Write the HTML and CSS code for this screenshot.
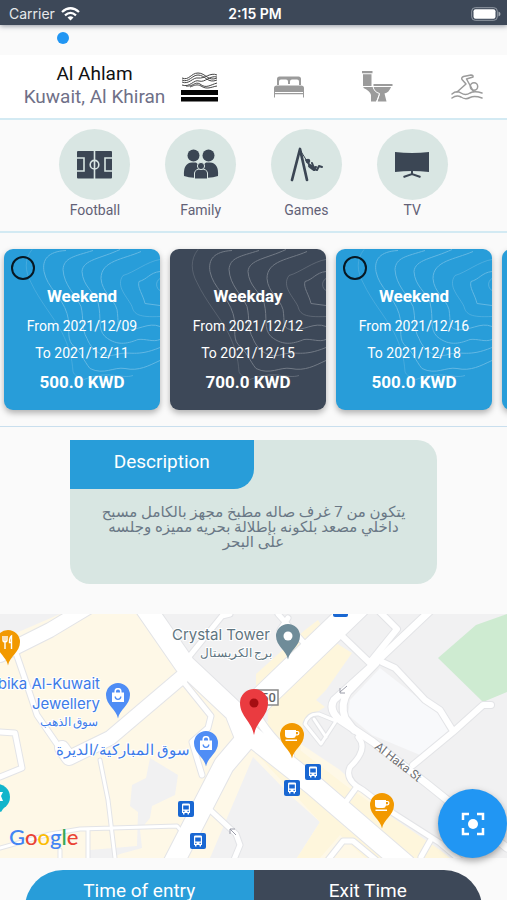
FILE: index.html
```html
<!DOCTYPE html>
<html lang="en">
<head>
<meta charset="utf-8">
<meta name="viewport" content="width=device-width, initial-scale=1">
<title>Al Ahlam</title>
<link rel="stylesheet" href="styles.css">
</head>
<body>
<svg class="defs" aria-hidden="true">
  <symbol id="contours" viewBox="0 0 156 160">
    <g fill="none" stroke="#fff" stroke-width="1">
      <path d="M28 0C20 10 21 22 27 33C36 52 48 65 58 83C65 97 68 108 69 122C70 126 75 128 80 130" opacity=".5"/>
      <path d="M62 1C44 2 38 10 40 22C43 38 58 47 63 64C67 77 62 87 68 95C77 102 80 112 86 119C100 126 110 117 121 119C135 122 145 116 156 111"/>
      <path d="M89 1C70 7 60 8 59 20C60 36 71 44 77 57C80 69 77 79 83 89C88 102 100 109 112 105C126 101 132 108 156 98"/>
      <path d="M116 0C97 9 79 10 78 22C79 37 90 42 94 53C98 69 93 79 101 87C114 98 126 93 134 90C142 89 149 93 156 90"/>
      <path d="M137 2C119 10 97 11 97 29C98 43 110 49 113 60C115 72 112 78 120 80C134 82 144 72 156 77"/>
      <path d="M156 10C143 12 130 23 119 26C111 37 124 48 128 57C130 65 135 68 156 67" opacity=".6"/>
      <path d="M156 22C146 23 143 30 135 32C133 38 139 45 141 54L156 56"/>
      <path d="M156 29C151 32 152 39 156 41M80 130C105 120 117 130 129 126" opacity=".7"/>
    </g>
  </symbol>
  <symbol id="pin" viewBox="-13 -13 26 38">
    <path d="M0 23.500C-1.500 14.500-12 10-12 0A12 12 0 0 1 12 0C12 10 1.500 14.500 0 23.500Z"/>
  </symbol>
  <symbol id="bus" viewBox="0 0 16 16">
    <rect width="16" height="16" rx="2" fill="#1967d2"/>
    <path fill="#fff" d="M4 3.500Q4 2.500 5.500 2.500h5Q12 2.500 12 3.500V12h-1v1.500H9.500V12h-3v1.500H5V12H4z"/>
    <path fill="#1967d2" d="M5.200 4.500h5.600v4H5.200zM5.200 9.800h1.300V11H5.200zM9.500 9.800h1.300V11H9.500z"/>
  </symbol>
  <symbol id="cup" viewBox="0 0 16 14">
    <path fill="#fff" d="M1 1h11v1h1.500Q15.500 2 15.500 4T13.500 6.500H12Q11.500 9 9 9H4Q1 9 1 6zM12 3v2.300h1.200q1-.2 1-1.200T13.200 3zM1.500 10.500h11.500V12H1.500z"/>
  </symbol>
  <symbol id="bag" viewBox="0 0 14 15">
    <path fill="none" stroke="#fff" stroke-width="1.500" d="M4.200 5V3.500a2.800 2.800 0 0 1 5.600 0V5"/>
    <path fill="#fff" d="M1 4.500h12V14H1z"/>
    <path fill="none" stroke="#4f8df5" stroke-width="1.300" d="M4.200 8.500a2.800 2.800 0 0 0 5.600 0"/>
  </symbol>
</svg>

<div class="app">
  <header class="status">
    <span class="carrier">Carrier
      <svg width="19" height="14" viewBox="0 0 19 14" aria-hidden="true"><g fill="none" stroke="#fff" stroke-width="2.300"><path d="M1 5Q9.500-2.500 18 5"/><path d="M4 8.300Q9.500 3.500 15 8.300"/></g><path fill="#fff" d="M6.500 10.500Q9.500 7.800 12.500 10.500L9.500 13.500z"/></svg>
    </span>
    <span class="clock">2:15 PM</span>
    <svg class="battery" width="30" height="14" viewBox="0 0 30 14" aria-hidden="true"><rect x=".7" y=".7" width="25.600" height="12.600" rx="3.500" fill="none" stroke="#939ba5"/><rect x="2.500" y="2.300" width="22" height="9.400" rx="2" fill="#fff"/><path fill="#a4abb3" d="M27.500 4.500q2 .7 2 2.500t-2 2.500z"/></svg>
  </header>

  <div class="pager"><span class="dot"></span></div>

  <section class="summary">
    <div class="place">
      <h1>Al Ahlam</h1>
      <p>Kuwait, Al Khiran</p>
    </div>
    <div class="facts">
      <svg width="38" height="30" viewBox="0 0 38 30" role="img" aria-label="Sea view"><path fill="#050505" d="M0 18h37v5H0zM0 25h37v4.500H0z"/><g fill="none" stroke="#444" stroke-width="1"><path d="M1 6C8 9 10 1 17 1C25 1 27 10 36 6"/><path d="M1 8C8 11 11 3 17 3C24 3 27 12 36 8"/><path d="M1 10C8 13 12 5 17 6C24 7 29 0 36 3"/><path d="M1 13C9 16 13 7 18 9C24 11 29 3 36 5"/><path d="M5 14C12 15 14 9 19 12C25 17 29 13 36 11"/><path d="M9 15C14 13 16 12 20 14C26 18 30 15 36 14"/></g></svg>
      <svg width="30" height="22" viewBox="0 0 30 22" role="img" aria-label="Bedrooms"><g fill="#9b9b9b"><path d="M3 9V3q0-2.500 2.500-2.500h19Q27 .500 27 3v6h-2V5.500Q25 3.500 23 3.500h-5Q16 3.500 16 5.500V8h-2V5.500Q14 3.500 12 3.500H7Q5 3.500 5 5.500V9z"/><path d="M0 12Q0 9.500 3 9.500h24q3 0 3 2.500v4H0zM0 17h30v1.200H0zM0 16h1v5.500H0zM29 16h1v5.500h-1z"/></g></svg>
      <svg width="31" height="31" viewBox="0 0 31 31" role="img" aria-label="Bathrooms"><g fill="#9b9b9b"><path d="M0 0h10.500v2.200H0zM1 3.200h8.500V15H1zM11.500 13h19v2h-19z"/><path d="M1.500 16h12Q14 20 18 22L14 30.500H9V24Q8 20 1.500 17z"/><path d="M12 16h17Q27 21.500 22.500 22.500L24.500 30.500H15.500L18 23Q13 21 12 16z"/></g><path stroke="#fff" fill="none" d="M11 15.500Q12 21 17.500 22.500L14.700 31"/></svg>
      <svg width="32" height="26" viewBox="0 0 32 26" role="img" aria-label="Swimming pool"><g fill="none" stroke="#9b9b9b" stroke-width="1.500" stroke-linecap="round" stroke-linejoin="round"><circle cx="23" cy="12.500" r="3.700"/><path d="M6 18L15 10L11 5.500Q10 3.500 12.500 2.500L20 .900Q22.500 1 22 3L15.500 5L22.500 17.500"/><path d="M1 20Q5.500 16 10 19Q14.500 22 19 19Q23.500 16.500 31 19"/><path d="M1 24Q5.500 20.500 10 23Q14.500 26 19 23.500Q23.500 21.500 31 24"/></g></svg>
    </div>
  </section>

  <ul class="features">
    <li><span class="disc"><svg width="35" height="28" viewBox="0 0 35 28" aria-hidden="true"><rect width="35" height="27.500" rx="1" fill="#3b4654"/><g fill="none" stroke="#d9e6e3" stroke-width="1.600"><path d="M17.500 0v28M0 7h7v13H0M35 7h-7v13h7"/><circle cx="17.500" cy="13.700" r="4.300"/></g></svg></span>Football</li>
    <li><span class="disc"><svg width="36" height="31" viewBox="0 0 36 31" aria-hidden="true"><g fill="#3b4654"><circle cx="10.500" cy="6.500" r="6"/><circle cx="25.500" cy="6.500" r="6"/><path d="M1 27Q0 14 9 13.500h4L18 18l5-4.500h4Q36 14 35 27Q27 30 18 28Q9 30 1 27z"/><g stroke="#d9e6e3"><path d="M11.500 30V24Q12 20 18 20t6.500 4v6z"/><circle cx="18" cy="17" r="3.600"/></g></g></svg></span>Family</li>
    <li><span class="disc"><svg width="33" height="36" viewBox="0 0 33 36" aria-hidden="true"><g fill="none" stroke="#3b4654" stroke-linecap="round" stroke-linejoin="round"><path stroke-width="2.700" d="M2 33L10 2L17 33"/><path stroke-width="1" d="M10 3L22 22"/><path stroke-width="4" d="M20 19L24 22"/><path stroke-width="2" d="M16 13L21 20L27 23L29 19L32 20M22 16L24 21L26 20"/></g><circle cx="18" cy="14" r="2.300" fill="#3b4654"/></svg></span>Games</li>
    <li><span class="disc"><svg width="36" height="26" viewBox="0 0 36 26" aria-hidden="true"><path fill="#3b4654" d="M1 0Q18 2 35 0V20Q18 18 1 20z"/><path d="M18 19v3M9.500 25L18 22L26.500 25" fill="none" stroke="#3b4654" stroke-width="2"/></svg></span>TV</li>
  </ul>

  <section class="periods">
    <label class="period"><svg class="lines" aria-hidden="true"><use href="#contours"/></svg><input type="checkbox"><strong>Weekend</strong><span>From 2021/12/09</span><span>To 2021/12/11</span><b>500.0 KWD</b></label>
    <div class="period booked"><svg class="lines" aria-hidden="true"><use href="#contours"/></svg><strong>Weekday</strong><span>From 2021/12/12</span><span>To 2021/12/15</span><b>700.0 KWD</b></div>
    <label class="period"><svg class="lines" aria-hidden="true"><use href="#contours"/></svg><input type="checkbox"><strong>Weekend</strong><span>From 2021/12/16</span><span>To 2021/12/18</span><b>500.0 KWD</b></label>
    <div class="period"></div>
  </section>

  <section class="about">
    <h2>Description</h2>
    <p lang="ar" dir="rtl">يتكون من 7 غرف صاله مطبخ مجهز بالكامل مسبح<br>داخلي مصعد بلكونه بإطلالة بحريه مميزه وجلسه<br>على البحر</p>
  </section>

  <section class="map">
    <svg class="canvas" viewBox="0 614 507 244" preserveAspectRatio="xMidYMid slice" role="img" aria-label="Map">
      <rect y="614" width="507" height="244" fill="#fef8e7"/>
      <g fill="#f1f1f2">
        <path d="M0 614H60L0 640z"/>
        <path d="M160 614H507V858H430L340 770L250 710L190 670z"/>
        <path d="M253 757L290 795L320 822L297 858H210z"/>
        <path d="M150 758L178 775L175 795L152 806L150 818L140 830L142 848L120 854L112 858H90V850L137 846L138 812L130 806L132 785L146 778z"/>
      </g>
      <g fill="#fef6dc">
        <path d="M160 614L180 642L170 650L140 614zM305 630L318 620L324 630L256 698V674zM333 641L352 653L326 690L316 700L325 707L304 720L300 755L268 728V710z"/>
        <path d="M270 735L300 750L345 785L440 850L450 858H400L350 820L290 770zM253 750L320 822L297 858H320L340 835L365 858H410L270 748z"/>
      </g>
      <path fill="#ceebd1" d="M438 658L476 625L507 614V692L483 702z"/>
      <path fill="#f8f9fb" d="M380 668L440 715L448 731L420 755L372 735L348 715L350 700z"/>
      <g class="road edge">
        <path class="w14" d="M90 606L50 630L0 655"/><path class="w20" d="M140 600L185 665L235 712L246 740"/><path class="w14" d="M183 676L110 738L69 758L62 748"/><path class="w20" d="M247 738L224 765L174 862"/><path class="w24" d="M362 602L255 705"/><path class="w20" d="M250 735L313 785L405 864"/><path class="w8" d="M248 695Q258 728 290 755"/>
        <path class="w5" d="M16 653L27 685L37 715L68 760M0 732L15 733L22 768L0 777M182 680L211 716L208 728L192 742L202 775M208 808L236 834L240 845L233 862M188 658L222 616L230 614M278 614L304 643M288 618L280 630"/>
        <path class="w3" d="M100 760L108 800L115 858M0 848L50 834L80 829L177 826L183 833M88 830V858M60 850V858"/>
        <path class="w7" d="M430 611L376 662L334 700Q328 710 340 720L373 742L426 783L507 848"/><path class="w7" d="M376 663L348 692Q340 704 345 718L354 730"/>
        <path class="w6" d="M343 637L370 663M379 611L397 629L372 660M382 662L395 668L425 700L440 710L453 731M413 765L453 732L483 705H491"/>
        <path class="w3" d="M336 721L321 744L305 724Q308 713 319 714L336 721M314 719L326 737"/>
        <path class="w5" d="M358 737Q369 749 350 767Q344 780 363 790L393 813L440 843L460 860M356 788L345 803M430 841L421 857M328 860L343 841H353L376 860"/>
      </g>
      <g class="road">
        <path class="w14" d="M90 606L50 630L0 655"/><path class="w20" d="M140 600L185 665L235 712L246 740"/><path class="w14" d="M183 676L110 738L69 758L62 748"/><path class="w20" d="M247 738L224 765L174 862"/><path class="w24" d="M362 602L255 705"/><path class="w20" d="M250 735L313 785L405 864"/><path class="w8" d="M248 695Q258 728 290 755"/>
        <path class="w5" d="M16 653L27 685L37 715L68 760M0 732L15 733L22 768L0 777M182 680L211 716L208 728L192 742L202 775M208 808L236 834L240 845L233 862M188 658L222 616L230 614M278 614L304 643M288 618L280 630"/>
        <path class="w3" d="M100 760L108 800L115 858M0 848L50 834L80 829L177 826L183 833M88 830V858M60 850V858"/>
        <path class="w7" d="M430 611L376 662L334 700Q328 710 340 720L373 742L426 783L507 848"/><path class="w7" d="M376 663L348 692Q340 704 345 718L354 730"/>
        <path class="w6" d="M343 637L370 663M379 611L397 629L372 660M382 662L395 668L425 700L440 710L453 731M413 765L453 732L483 705H491"/>
        <path class="w3" d="M336 721L321 744L305 724Q308 713 319 714L336 721M314 719L326 737"/>
        <path class="w5" d="M358 737Q369 749 350 767Q344 780 363 790L393 813L440 843L460 860M356 788L345 803M430 841L421 857M328 860L343 841H353L376 860"/>
      </g>
      <path d="M347 686L340 692M340 688V693H345M236 835L230 829M230 834V829H235" fill="none" stroke="#9a9ca8"/>
      <rect x="255" y="690" width="23" height="15" fill="#fff" stroke="#888" stroke-width="1.500"/>
      <text x="261" y="702" class="shield">50</text>
      <rect x="333" y="604" width="15" height="13" rx="2" fill="#1967d2"/>

      <use href="#pin" x="-5" y="629" width="26" height="38" fill="#f29900"/>
      <path d="M3 636v4q0 2 2 2v7M5 636v6M7 636v4q0 2-2 2M11.500 649V636q-2 1-2 6.500h2" fill="none" stroke="#fff" stroke-width="1.400"/>
      <use href="#pin" x="105" y="682" width="26" height="38" fill="#4f8df5"/><use href="#bag" x="111" y="688" width="14" height="15"/>
      <use href="#pin" x="193" y="730" width="26" height="38" fill="#4f8df5"/><use href="#bag" x="199" y="736" width="14" height="15"/>
      <use href="#pin" x="275" y="623" width="26" height="38" fill="#6f8c99"/><circle cx="288" cy="636" r="4.500" fill="#fff"/>
      <use href="#pin" x="279" y="722" width="26" height="38" fill="#f29900"/><use href="#cup" x="284" y="729" width="16" height="14"/>
      <use href="#pin" x="369" y="792" width="26" height="38" fill="#f29900"/><use href="#cup" x="374" y="799" width="16" height="14"/>
      <circle cx="-3" cy="797" r="13" fill="#12b5cb"/><path d="M-8 807L1 812L7 803z" fill="#12b5cb"/><path d="M0 792h3l-2 4 2 5H0" fill="#fff"/>
      <use href="#bus" x="305" y="764" width="16" height="16"/><use href="#bus" x="284" y="780" width="16" height="16"/><use href="#bus" x="178" y="801" width="16" height="16"/><use href="#bus" x="190" y="833" width="16" height="16"/>

      <path d="M254 735C252 722 240 716 240 703A14 14 0 0 1 268 703C268 716 256 722 254 735Z" fill="#ea3b40"/><circle cx="254" cy="703" r="4.500" fill="#a50e12"/>

      <g class="poi grey"><text x="270" y="640" text-anchor="end" class="t15">Crystal Tower</text><text x="236" y="657" text-anchor="middle" class="t12" lang="ar">برج الكريستال</text></g>
      <g class="poi blue"><text x="100" y="689" text-anchor="end" class="t15">bika Al-Kuwait</text><text x="100" y="709" text-anchor="end" class="t15">Jewellery</text><text x="69" y="726" text-anchor="middle" class="t12" lang="ar">سوق الذهب</text><text x="123" y="755" text-anchor="middle" class="t15" lang="ar">سوق المباركية/الديرة</text></g>
      <text class="street" transform="translate(374 748) rotate(38)">Al Haka St</text>
      <text class="brand" x="9" y="845"><tspan fill="#4285f4">G</tspan><tspan fill="#ea4335">o</tspan><tspan fill="#fbbc05">o</tspan><tspan fill="#4285f4">g</tspan><tspan fill="#34a853">l</tspan><tspan fill="#ea4335">e</tspan></text>
    </svg>
    <button class="locate" type="button" aria-label="Center map"><svg width="24" height="24" viewBox="0 0 24 24" aria-hidden="true"><path d="M2 8V2h6M16 2h6v6M22 16v6h-6M8 22H2v-6" fill="none" stroke="#fff" stroke-width="2.500"/><circle cx="12" cy="12" r="5" fill="#fff"/></svg></button>
  </section>

  <div class="times">
    <button type="button" class="entry">Time of entry</button><button type="button" class="exit">Exit Time</button>
  </div>
</div>
</body>
</html>
```
FILE: styles.css
```css
* { box-sizing: border-box; }
body { margin: 0; background: #fafafa; font-family: Roboto, "Noto Sans", "DejaVu Sans", sans-serif; }
h1, h2, p, ul { margin: 0; padding: 0; font-weight: 400; }
button { border: 0; font: inherit; color: #fff; }
.defs { position: absolute; width: 0; height: 0; }
.app { height: 100vh; overflow: hidden; }

.status { position: relative; display: grid; grid-template-columns: 1fr auto 1fr; align-items: center; height: 25px; padding: 2px 6px 0 9px; background: #3d4858; color: #fff; font: 14px Inter, sans-serif; box-shadow: 0 1px 5px rgba(40, 50, 70, .5); }
.carrier { display: flex; align-items: center; gap: 6px; color: #e6e8eb; }
.clock { font-weight: 600; }
.battery { justify-self: end; }

.pager { height: 30px; padding: 7px 57px; }
.dot { display: block; width: 12px; height: 12px; border-radius: 50%; background: #2196f3; }

.summary { display: flex; align-items: center; height: 65px; background: #fff; border-bottom: 2px solid #d3eaf3; }
.place { width: 157px; margin-left: 16px; padding-bottom: 4px; text-align: center; font-size: 19px; line-height: 23px; color: #6f7088; white-space: nowrap; }
.place h1 { font-size: 19px; color: #111; }
.facts { flex: 1; display: grid; grid-template-columns: repeat(4, 1fr); place-items: center; margin: 0 -4px 0 -17px; }

.features { display: grid; grid-template-columns: repeat(4, 1fr); height: 113px; padding: 9px 42px 0; list-style: none; font-size: 14px; line-height: 20px; color: #626176; border-bottom: 2px solid #d3eaf3; }
.features li { display: flex; flex-direction: column; align-items: center; }
.disc { display: grid; place-items: center; width: 71px; height: 71px; border-radius: 50%; background: #d9e6e3; }

.periods { display: flex; gap: 10px; height: 194px; padding: 16px 0 0 4px; overflow: hidden; border-bottom: 1px solid #c9dfee; }
.period { position: relative; flex: 0 0 156px; display: flex; flex-direction: column; align-items: center; height: 161px; padding-top: 35px; border-radius: 9px; background: #289dd9; color: #fff; font-size: 14px; line-height: 27px; box-shadow: 0 3px 6px rgba(0, 0, 0, .3); }
.period > * { position: relative; }
.period strong { font-size: 17px; margin-bottom: 4px; line-height: 25px; }
.period b { font-size: 17px; line-height: 30px; }
.booked { background: #3d4858; }
.period .lines { position: absolute; inset: 0; width: 100%; height: 100%; opacity: .27; }
.period input { position: absolute; top: 7px; left: 7px; width: 24px; height: 24px; margin: 0; appearance: none; border: 2px solid #071722; border-radius: 50%; }

.about { height: 144px; margin: 13px 70px 30px; border-radius: 0 20px 20px 20px; background: #d8e6e2; text-align: center; }
.about h2 { width: 50%; height: 49px; border-radius: 0 0 20px 0; background: #289dd9; color: #fff; font-size: 19px; line-height: 43px; }
.about p { padding-top: 16px; font-size: 15px; line-height: 15px; color: #6a7886; white-space: nowrap; }

.map { position: relative; height: 244px; }
.canvas { display: block; width: 100%; height: 100%; }
.road { fill: none; stroke: #fff; stroke-linejoin: round; stroke-linecap: round; }
.edge { stroke: #e3e4e7; }
.w3 { stroke-width: 3px; }
.w5 { stroke-width: 5px; }
.w6 { stroke-width: 6px; }
.w7 { stroke-width: 7px; }
.w8 { stroke-width: 8px; }
.w14 { stroke-width: 14px; }
.w20 { stroke-width: 20px; }
.w24 { stroke-width: 24px; }
.edge .w3 { stroke-width: 5px; }
.edge .w5 { stroke-width: 7px; }
.edge .w6 { stroke-width: 8px; }
.edge .w7 { stroke-width: 9px; }
.edge .w8 { stroke-width: 10px; }
.edge .w14 { stroke-width: 16px; }
.edge .w20 { stroke-width: 22px; }
.edge .w24 { stroke-width: 26px; }
.poi { stroke: #fff; stroke-width: 2px; paint-order: stroke; font-family: Inter, "DejaVu Sans", sans-serif; }
.poi [lang="ar"] { font-family: Roboto, sans-serif; }
.grey { fill: #607580; }
.blue { fill: #3d7be8; }
.t12 { font-size: 12px; }
.t15 { font-size: 15px; }
.street { font-size: 12px; fill: #6f7074; }
.shield { font-size: 13px; font-weight: 500; fill: #666; }
.brand { font: 500 22px Lato, sans-serif; }
.locate { position: absolute; right: 0; bottom: 0; display: grid; place-items: center; width: 69px; height: 69px; padding: 0; border-radius: 50%; background: #2196f3; box-shadow: 0 3px 7px rgba(0, 0, 0, .35); }

.times { display: flex; margin: 12px 25px 0; border-radius: 38px 38px 0 0; overflow: hidden; font-size: 19px; }
.times button { flex: 1; height: 40px; padding: 0; }
.entry { background: #289dd9; }
.exit { background: #3d4858; }
```
